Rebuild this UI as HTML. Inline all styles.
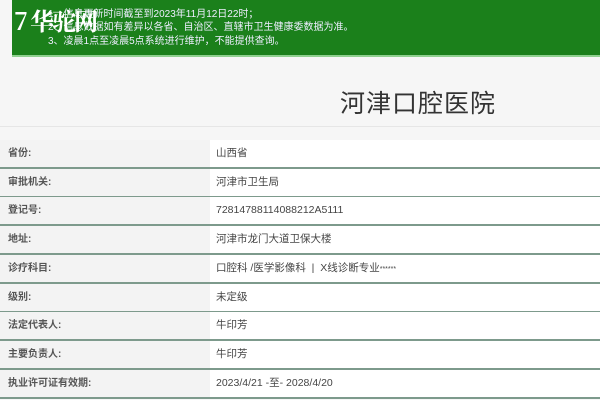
<!DOCTYPE html>
<html><head><meta charset="utf-8"><style>
body{margin:0;width:600px;height:400px;background:#f6f6f6;font-family:"Liberation Sans","Noto Sans CJK SC",sans-serif;overflow:hidden;position:relative}
.ban{position:absolute;left:12px;top:0;width:588px;height:55px;background:#1b801b;border-bottom:2px solid #8fd08f}
.ban div{position:absolute;left:36px;color:#eef;font-size:10px;line-height:13px;white-space:nowrap}
.logo{position:absolute;left:14px;top:2px;color:#fff;font-size:24px;font-weight:bold;font-family:"Noto Serif CJK SC",serif;letter-spacing:-2px}
h1{position:absolute;left:340px;top:84px;margin:0;font-weight:normal;font-size:25px;color:#333;letter-spacing:1px}
.hr{position:absolute;left:0;top:126px;width:600px;height:1px;background:#e6e6e6}
.row{position:absolute;left:0;width:600px;height:27px;border-bottom:2px solid #7d9a8c;font-size:10px;color:#333}
.row .l{position:absolute;left:0;top:0;width:202px;height:27px;background:#f3f3f3;padding-left:8px;line-height:27px;font-weight:bold;color:#555}
.row .v{position:absolute;left:210px;top:0;right:0;height:27px;background:#fff;padding-left:6px;line-height:27px;color:#444;font-size:10.5px}
</style></head><body>
<div class="ban">
<div style="top:8px">1、信息更新时间截至到2023年11月12日22时；</div>
<div style="top:21px">2、信息数据如有差异以各省、自治区、直辖市卫生健康委数据为准。</div>
<div style="top:35px">3、凌晨1点至凌晨5点系统进行维护，不能提供查询。</div>
</div>
<div class="logo">7 华驼网</div>
<h1>河津口腔医院</h1>
<div class="hr"></div>
<div class="row" style="top:140px"><div class="l">省份:</div><div class="v">山西省</div></div>
<div class="row" style="top:169px"><div class="l">审批机关:</div><div class="v">河津市卫生局</div></div>
<div class="row" style="top:197px"><div class="l">登记号:</div><div class="v">72814788114088212A5111</div></div>
<div class="row" style="top:226px"><div class="l">地址:</div><div class="v">河津市龙门大道卫保大楼</div></div>
<div class="row" style="top:255px"><div class="l">诊疗科目:</div><div class="v">口腔科 /医学影像科 &nbsp;|&nbsp; X线诊断专业<span style="font-size:7px">******</span></div></div>
<div class="row" style="top:284px"><div class="l">级别:</div><div class="v">未定级</div></div>
<div class="row" style="top:312px"><div class="l">法定代表人:</div><div class="v">牛印芳</div></div>
<div class="row" style="top:341px"><div class="l">主要负责人:</div><div class="v">牛印芳</div></div>
<div class="row" style="top:370px"><div class="l">执业许可证有效期:</div><div class="v">2023/4/21 -至- 2028/4/20</div></div>
</body></html>
